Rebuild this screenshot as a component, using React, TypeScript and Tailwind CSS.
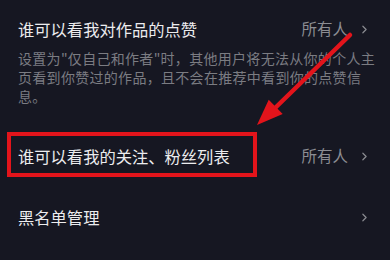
import { ChevronRight } from 'lucide-react'

const font = { fontFamily: '"Noto Sans CJK SC", "Noto Sans", sans-serif' }

const Chevron = () => (
  <ChevronRight className="w-[13px] h-[13px] text-[#8a8b91] ml-[10px] mr-[1px]" strokeWidth={2.2} />
)

export default function App() {
  return (
    <div className="relative w-[390px] h-[260px] overflow-hidden bg-[#161722] pl-[18px] pr-[18px]" style={font}>
      <div className="pt-[17px]">
        <div className="flex items-center h-[24px]">
          <span className="flex-1 text-[16.3px] text-[#ececee]">谁可以看我对作品的点赞</span>
          <span className="text-[15.5px] text-[#8c8d93]">所有人</span>
          <Chevron />
        </div>
        <p className="mt-[7.5px] text-[14px] leading-[19px] tracking-[0.3px] text-[#7b7c82] whitespace-nowrap">
          设置为"仅自己和作者"时，其他用户将无法从你的个人主
          <br />
          页看到你赞过的作品，且不会在推荐中看到你的点赞信
          <br />
          息。
        </p>
      </div>

      <div className="relative flex items-center h-[46px] mt-[27.5px]">
        <span className="flex-1 text-[16.3px] text-[#ececee]">谁可以看我的关注、粉丝列表</span>
        <span className="text-[15.5px] text-[#8c8d93]">所有人</span>
        <Chevron />
        <div className="absolute left-[-11px] top-[-1px] w-[250px] h-[45px] border-[4px] border-[#e3141b]" />
      </div>

      <div className="flex items-center h-[46px] mt-[15px]">
        <span className="flex-1 text-[16.3px] text-[#ececee]">黑名单管理</span>
        <Chevron />
      </div>

      <svg className="absolute inset-0 pointer-events-none" width="390" height="260" viewBox="0 0 390 260">
        <line x1="350" y1="35" x2="272" y2="111" stroke="#e3141b" strokeWidth="4.5" strokeLinecap="round" />
        <polygon points="257,125 268.7,99.7 282.7,114.1" fill="#e3141b" />
      </svg>
    </div>
  )
}
